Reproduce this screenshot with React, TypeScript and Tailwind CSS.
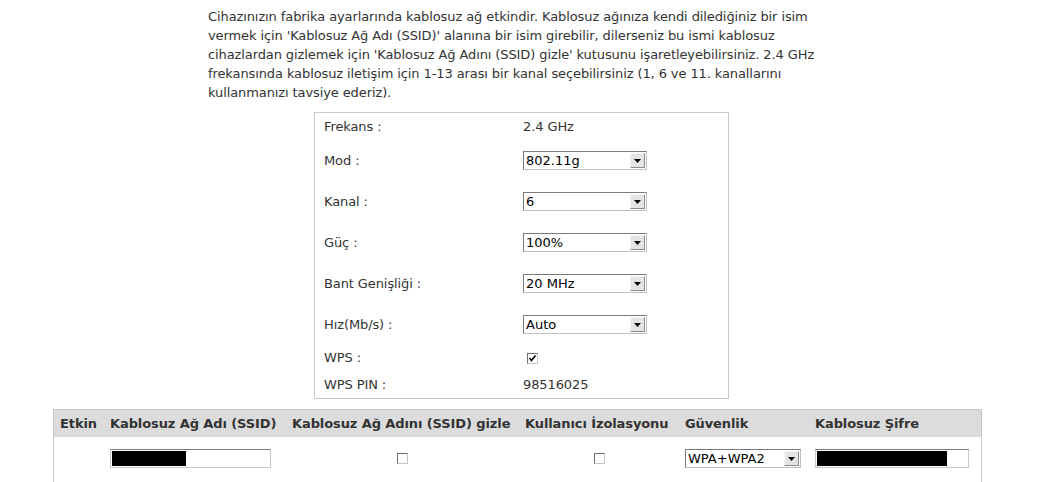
import React from "react";

const font = { fontFamily: '"DejaVu Sans", Verdana, sans-serif' };

function Select({ value, width }: { value: string; width: number }) {
  return (
    <div
      className="flex h-[19px] items-stretch border border-t-[#7a7a7a] border-l-[#7a7a7a] border-r-[#c0c0c0] border-b-[#c0c0c0] bg-white"
      style={{ width }}
    >
      <div className="flex flex-1 items-center overflow-hidden pl-[2px] text-[13px] tracking-normal text-black">
        {value}
      </div>
      <div className="m-[1px] flex w-[15px] items-center justify-center border border-t-[#f4f4f4] border-l-[#f4f4f4] border-r-[#8c8c8c] border-b-[#8c8c8c] bg-[#e4e4e4]">
        <svg width="7" height="4" viewBox="0 0 7 4">
          <polygon points="0,0 7,0 3.5,4" fill="#000" />
        </svg>
      </div>
    </div>
  );
}

function Checkbox({ checked }: { checked?: boolean }) {
  return (
    <div className="flex h-[11px] w-[11px] items-center justify-center border border-t-[#6e6e6e] border-l-[#6e6e6e] border-r-[#c4c4c4] border-b-[#c4c4c4] bg-white">
      {checked && (
        <svg width="9" height="9" viewBox="0 0 9 9">
          <path d="M1.5 4 L3.5 6.5 L7.5 1.5" stroke="#000" strokeWidth="1.6" fill="none" />
        </svg>
      )}
    </div>
  );
}

function Row({ label, h, children }: { label: string; h: number; children: React.ReactNode }) {
  return (
    <div className="flex items-center" style={{ height: h }}>
      <div className="w-[208px] pl-[9px]">{label}</div>
      <div className="flex items-center">{children}</div>
    </div>
  );
}

function MaskedInput({ width, fill }: { width: number; fill: number }) {
  return (
    <div
      className="flex h-[19px] items-stretch border border-t-[#7a7a7a] border-l-[#c8c8c8] border-r-[#c8c8c8] border-b-[#c8c8c8] bg-white p-[1px]"
      style={{ width }}
    >
      <div className="bg-black" style={{ width: fill }} />
    </div>
  );
}

export default function App() {
  return (
    <div className="relative h-[482px] w-[1043px] overflow-hidden bg-white text-[13px] tracking-[-0.1px] text-[#333]" style={font}>
      <div className="ml-[208px] whitespace-nowrap pt-[7px] leading-[19px]">
        Cihazınızın fabrika ayarlarında kablosuz ağ etkindir. Kablosuz ağınıza kendi dilediğiniz bir isim
        <br />
        vermek için 'Kablosuz Ağ Adı (SSID)' alanına bir isim girebilir, dilerseniz bu ismi kablosuz
        <br />
        cihazlardan gizlemek için 'Kablosuz Ağ Adını (SSID) gizle' kutusunu işaretleyebilirsiniz. 2.4 GHz
        <br />
        frekansında kablosuz iletişim için 1-13 arası bir kanal seçebilirsiniz (1, 6 ve 11. kanallarını
        <br />
        kullanmanızı tavsiye ederiz).
      </div>

      <div className="ml-[314px] mt-[10px] w-[415px] border border-[#c8c8c8]">
        <Row label="Frekans :" h={27}>
          <span>2.4 GHz</span>
        </Row>
        <Row label="Mod :" h={41}>
          <Select value="802.11g" width={124} />
        </Row>
        <Row label="Kanal :" h={41}>
          <Select value="6" width={124} />
        </Row>
        <Row label="Güç :" h={41}>
          <Select value="100%" width={124} />
        </Row>
        <Row label="Bant Genişliği :" h={41}>
          <Select value="20 MHz" width={124} />
        </Row>
        <Row label="Hız(Mb/s) :" h={41}>
          <Select value="Auto" width={124} />
        </Row>
        <Row label="WPS :" h={26}>
          <div className="pl-[4px]">
            <Checkbox checked />
          </div>
        </Row>
        <Row label="WPS PIN :" h={27}>
          <span>98516025</span>
        </Row>
      </div>

      <div className="ml-[53px] mt-[10px] w-[929px] border-l border-r border-t border-[#c8c8c8]">
        <div className="grid h-[27px] grid-cols-[50px_182px_233px_160px_130px_172px] items-center bg-[#dcdcdc] font-bold text-[#333]">
          <div className="pl-[6px]">Etkin</div>
          <div className="pl-[6px]">Kablosuz Ağ Adı (SSID)</div>
          <div className="pl-[6px]">Kablosuz Ağ Adını (SSID) gizle</div>
          <div className="pl-[6px]">Kullanıcı İzolasyonu</div>
          <div className="pl-[6px]">Güvenlik</div>
          <div className="pl-[6px]">Kablosuz Şifre</div>
        </div>
        <div className="grid h-[50px] grid-cols-[50px_182px_233px_160px_130px_172px] items-start pt-[12px]">
          <div />
          <div className="pl-[6px]">
            <MaskedInput width={161} fill={74} />
          </div>
          <div className="flex justify-center pt-[4px]">
            <Checkbox />
          </div>
          <div className="flex justify-center pt-[4px]">
            <Checkbox />
          </div>
          <div className="pl-[6px]">
            <Select value="WPA+WPA2" width={116} />
          </div>
          <div className="pl-[6px]">
            <MaskedInput width={154} fill={130} />
          </div>
        </div>
      </div>
    </div>
  );
}
